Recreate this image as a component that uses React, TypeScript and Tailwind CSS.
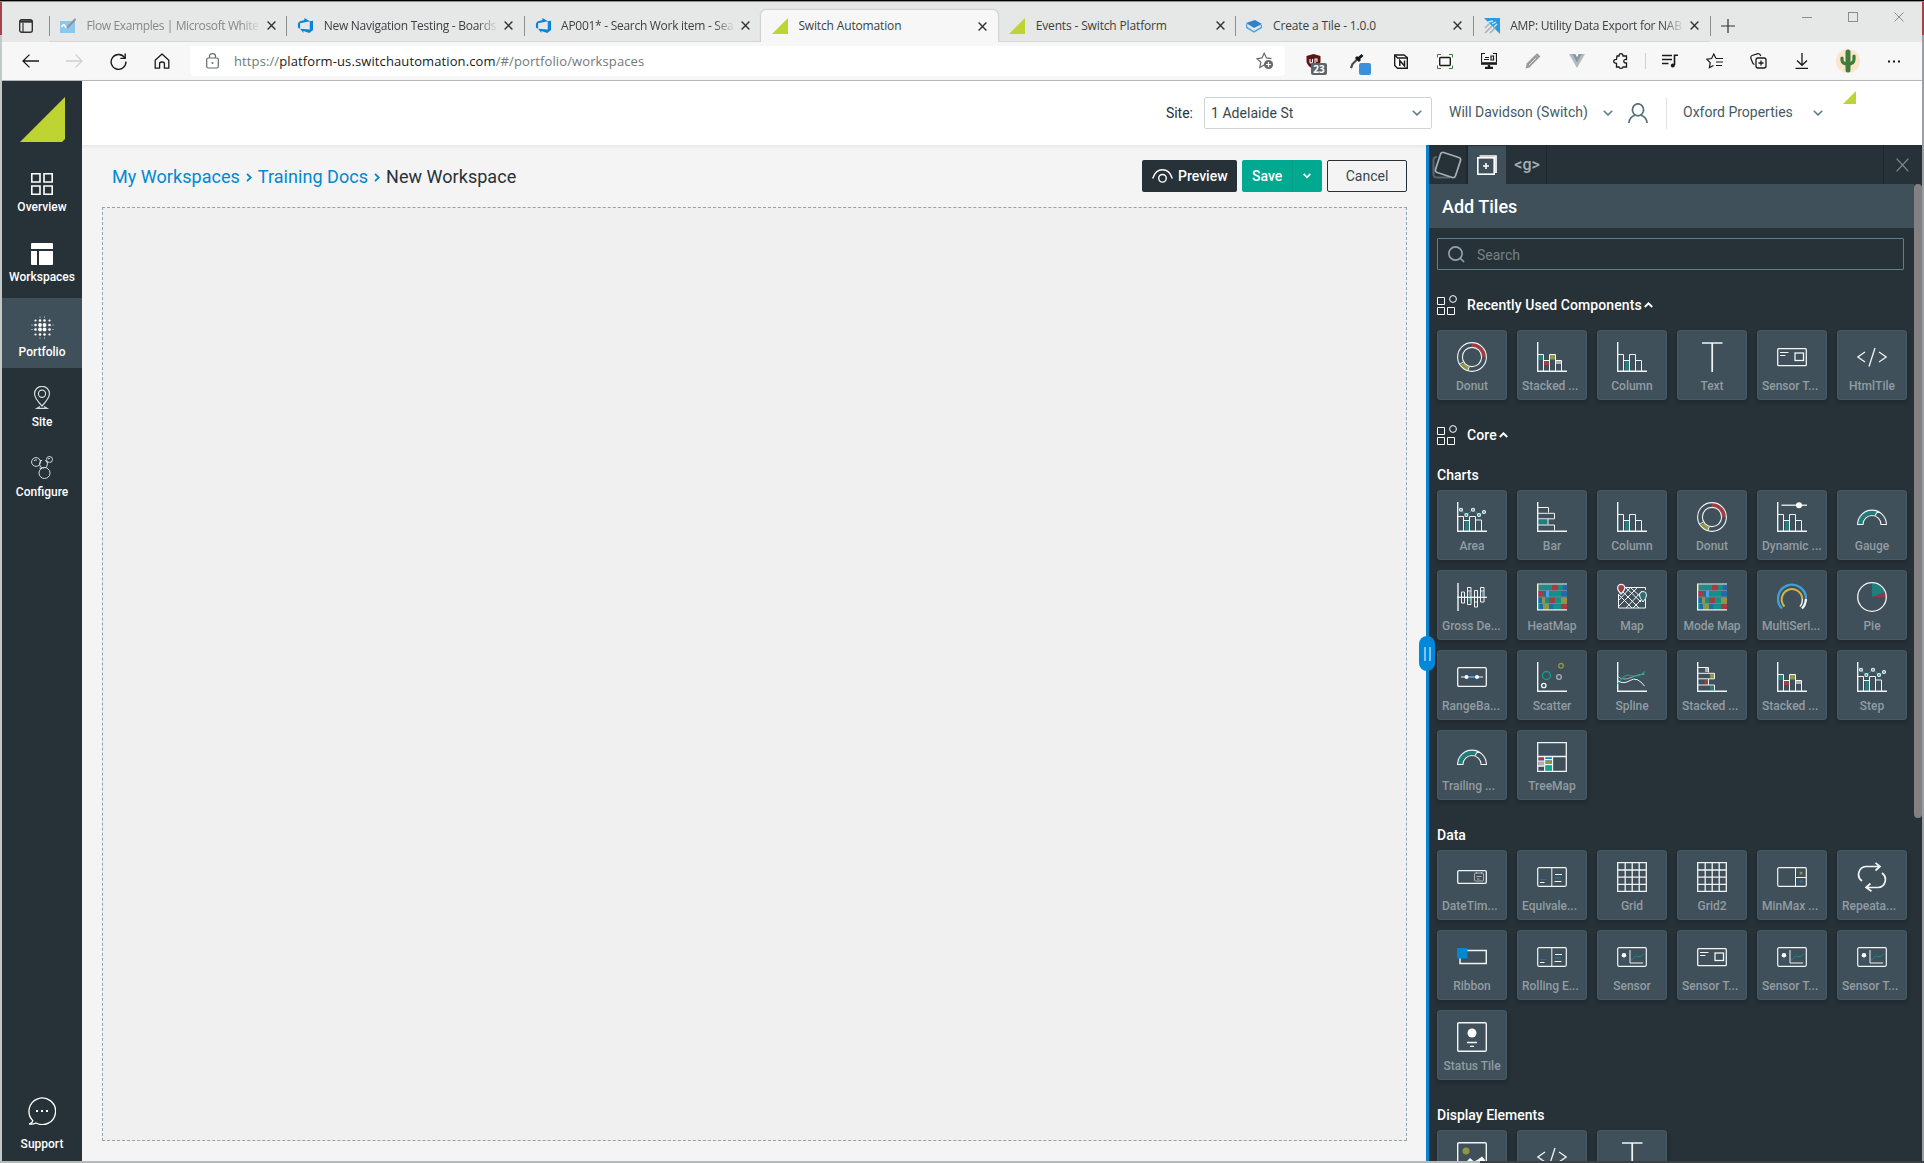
import React from "react";
import clsx from "clsx";

// ── Shared bits ──────────────────────────────────────────────
const TEAL = "#1f7f7a";
const RED = "#a03e42";
const OLIVE = "#8f9645";
const GREY = "#a9b1b6";

function Svg({
  w,
  h = w,
  box,
  className,
  children,
}: {
  w: number;
  h?: number;
  box?: string;
  className?: string;
  children: React.ReactNode;
}) {
  return (
    <svg
      width={w}
      height={h}
      viewBox={box ?? `0 0 ${w} ${h}`}
      fill="none"
      stroke="currentColor"
      className={clsx("block shrink-0", className)}
    >
      {children}
    </svg>
  );
}

function Chevron({ className }: { className?: string }) {
  return (
    <Svg w={10} h={6} className={className}>
      <path d="M0.7 0.7 L5 4.9 L9.3 0.7" strokeWidth="1.5" />
    </Svg>
  );
}

// ── Browser tabs ─────────────────────────────────────────────
function DevOpsIcon() {
  return (
    <Svg w={17} box="0 0 18 18">
      <path
        d="M17 4v9.74l-4 3.28-6.2-2.26V17l-3.51-4.59 10.23.8V4.44zm-3.41.49L7.85 1v2.29L2.58 4.84 1 6.87v4.61l2.26 1V6.57z"
        fill="#0a84d8"
        stroke="none"
      />
    </Svg>
  );
}

function SwitchIcon() {
  return (
    <Svg w={16}>
      <path d="M0 16 L16 0 V16Z" fill="#bdd433" stroke="none" />
    </Svg>
  );
}

function WhiteboardIcon() {
  return (
    <Svg w={16}>
      <rect y="3" width="15" height="12" fill="#8cc8ee" stroke="none" />
      <path d="M1.5 9 Q4 5 5 8 T9 8" stroke="#fff" strokeWidth="1.6" />
      <path d="M7 10 L15.5 1" stroke="#8b9296" strokeWidth="2" />
    </Svg>
  );
}

function StackIcon() {
  return (
    <Svg w={16}>
      <path d="M0 5 L9 2 L16 6 L8 10Z" fill="#2d83c9" stroke="none" />
      <path d="M0.5 6 V9.5 L8 14 L15.5 9.5 V7" stroke="#4da3dd" strokeWidth="1.5" />
    </Svg>
  );
}

function AmpIcon() {
  return (
    <Svg w={16}>
      <path d="M0 0 H16 V16Z" fill="#2b9be0" stroke="none" />
      <path d="M4 4 L9 3 M8 6 L12 4 M10 9 L13 6" stroke="#cfe9fa" strokeWidth="1.3" />
      <path d="M1 10 L5 6 M1 15 L8 8 M6 15 L11 10" stroke="#a9b2b8" strokeWidth="1.6" />
    </Svg>
  );
}

type BrowserTab = {
  title: string;
  icon: React.ReactNode;
  active?: boolean;
  faded?: boolean;
  long?: boolean;
  divider?: boolean;
};

const BROWSER_TABS: BrowserTab[] = [
  { title: "Flow Examples | Microsoft White", icon: <WhiteboardIcon />, faded: true, long: true, divider: true },
  { title: "New Navigation Testing - Boards", icon: <DevOpsIcon />, long: true, divider: true },
  { title: "AP001* - Search Work item - Sea", icon: <DevOpsIcon />, long: true, divider: true },
  { title: "Switch Automation", icon: <SwitchIcon />, active: true },
  { title: "Events - Switch Platform", icon: <SwitchIcon /> },
  { title: "Create a Tile - 1.0.0", icon: <StackIcon />, divider: true },
  { title: "AMP: Utility Data Export for NAB", icon: <AmpIcon />, long: true, divider: true },
];

function TabStrip() {
  return (
    <div className="flex h-[40px] shrink-0 items-end bg-[#e6e7e7]">
      <div className="flex h-8 w-[47px] items-center pl-[17px]">
        <Svg w={14} className="text-[#333]">
          <rect x="0.7" y="0.7" width="12.6" height="12.6" rx="2" strokeWidth="1.4" />
          <path d="M1 2.5 H13" strokeWidth="2.4" />
          <path d="M4 4 V13" strokeWidth="1.2" />
        </Svg>
      </div>
      {BROWSER_TABS.map((tab) => (
        <div
          key={tab.title}
          className={clsx(
            "flex h-[32px] w-[237.3px] items-center",
            tab.active
              ? "rounded-t-[5px] bg-[#f7f7f7] shadow-[0_0_2px_rgba(0,0,0,0.35)]"
              : "border-b border-[#d5d6d6]",
          )}
        >
          <span className={clsx("h-[20px] w-px", tab.divider && "bg-[#8b8d8e]")} />
          <span className="ml-[10px] w-[16px]">{tab.icon}</span>
          <span
            className={clsx(
              "ml-[10.5px] w-[174px] text-[12px] whitespace-nowrap",
              tab.faded ? "text-[#868886]" : "text-[#3d3f40]",
              tab.faded
                ? "tracking-[-0.38px]"
                : tab.long
                  ? "tracking-[-0.28px]"
                  : "tracking-[-0.15px]",
              tab.long && "[mask-image:linear-gradient(to_right,black_88%,transparent)]",
            )}
          >
            {tab.title}
          </span>
          <Svg w={9} className="ml-[6px] text-[#333]">
            <path d="M0.6 0.6 L8.4 8.4 M8.4 0.6 L0.6 8.4" strokeWidth="1.4" />
          </Svg>
        </div>
      ))}
      <span className="mb-[6px] h-[20px] w-px bg-[#8b8d8e]" />
      <Svg w={14} className="mb-[9px] ml-[10px] text-[#333]">
        <path d="M7 0 V14 M0 7 H14" strokeWidth="1.2" />
      </Svg>
      <div className="mb-[20px] ml-auto flex items-center gap-[36px] pr-[18px] text-[#8b8d8e]">
        <Svg w={10}>
          <path d="M0 5.5 H10" />
        </Svg>
        <Svg w={10}>
          <rect x="0.5" y="0.5" width="9" height="9" />
        </Svg>
        <Svg w={10}>
          <path d="M0.5 0.5 L9.5 9.5 M9.5 0.5 L0.5 9.5" />
        </Svg>
      </div>
    </div>
  );
}

// ── Browser toolbar ──────────────────────────────────────────
function ToolCell({ children }: { children: React.ReactNode }) {
  return (
    <div className="relative flex h-full w-[44px] shrink-0 items-center justify-center">
      {children}
    </div>
  );
}

function Toolbar() {
  return (
    <div className="flex h-[39px] shrink-0 items-center border-b border-[#b9b9b9] bg-[#f7f7f7] pl-[6px] text-[#1b1b1b]">
      <ToolCell>
        <Svg w={17} h={14}>
          <path d="M17 7 H1 M7.5 0.6 L1 7 L7.5 13.4" strokeWidth="1.3" />
        </Svg>
      </ToolCell>
      <ToolCell>
        <Svg w={17} h={14} className="text-[#cfcfcf]">
          <path d="M0 7 H16 M9.5 0.6 L16 7 L9.5 13.4" strokeWidth="1.3" />
        </Svg>
      </ToolCell>
      <ToolCell>
        <Svg w={17}>
          <path d="M14.8 5 A7.4 7.4 0 1 0 15.9 8.5" strokeWidth="1.4" />
          <path d="M15.2 0.5 V5.4 H10.3" strokeWidth="1.4" />
        </Svg>
      </ToolCell>
      <ToolCell>
        <Svg w={16}>
          <path
            d="M1.2 7.2 L8 1 L14.8 7.2 V15.2 H10.4 V10.4 Q10.4 9 8 9 T5.6 10.4 V15.2 H1.2Z"
            strokeWidth="1.3"
            strokeLinejoin="round"
          />
        </Svg>
      </ToolCell>
      <div className="ml-[6px] flex h-[30px] w-[1095px] items-center rounded-[4px] bg-white pl-[16px] pr-[11px]">
        <Svg w={13} h={16} className="text-[#666b6c]">
          <rect x="0.7" y="5" width="11.6" height="10" rx="1.5" strokeWidth="1.2" />
          <path d="M3.5 5 V3 Q3.5 0.7 6.5 0.7 T9.5 3 V5" strokeWidth="1.2" />
          <circle cx="6.5" cy="10" r="1" fill="currentColor" stroke="none" />
        </Svg>
        <span className="ml-[15px] pt-px text-[13px] tracking-[0.11px] whitespace-nowrap text-[#73787a]">
          https://<span className="text-[#1b1b1b]">platform-us.switchautomation.com</span>
          /#/portfolio/workspaces
        </span>
        <Svg w={18} className="ml-auto text-[#666b6c]">
          <path
            d="M8 13 L3.8 15.5 L4.8 10.2 L1 6.6 L6 5.9 L8.2 1.2 L10.5 5.9 L15.5 6.6"
            strokeWidth="1.2"
          />
          <circle cx="12.5" cy="12.5" r="4.6" fill="#666b6c" stroke="none" />
          <path d="M12.5 10 V15 M10 12.5 H15" stroke="#fff" strokeWidth="1.2" />
        </Svg>
      </div>
      <div className="ml-[6px] flex h-full">
        <ToolCell>
          <Svg w={15}>
            <path d="M0.5 2 L7.5 0 L14.5 2 V8 Q13 13 7.5 15 Q2 13 0.5 8Z" fill="#5c1416" stroke="none" />
            <path d="M4 5 V8 Q4 9 5 9 T6.5 8 V5 M9 9 V5 H11 V8" stroke="#fff" strokeWidth="1.1" />
          </Svg>
          <span className="absolute top-[21px] left-[20px] flex h-[12px] w-[16px] items-center justify-center rounded-[2px] bg-[#5a6669] text-[10px] leading-[12px] font-bold text-white">
            23
          </span>
        </ToolCell>
        <ToolCell>
          <Svg w={14} h={16}>
            <path d="M1 15 L2.5 11 L8 5.5" stroke="#444d52" strokeWidth="2.2" />
            <path d="M6 4 L10 8 M8 6 L12.5 2" stroke="#14181a" strokeWidth="3" />
          </Svg>
          <span className="absolute top-[21px] left-[24px] size-[12px] rounded-[2px] bg-[#3c8fd9]" />
        </ToolCell>
        <ToolCell>
          <Svg w={14} h={15}>
            <path d="M0.7 1 H10 L13.3 3.5 V14.3 H3.5 L0.7 11.5Z" strokeWidth="1.4" fill="#fff" />
            <path d="M1 1.5 L3.7 4 H13" strokeWidth="1.4" />
            <path d="M5.8 12 V6.5 L10.5 12 V6.5" strokeWidth="1.5" />
          </Svg>
        </ToolCell>
        <ToolCell>
          <Svg w={16} h={15}>
            <rect x="2.7" y="3.5" width="10.6" height="8" rx="1" strokeWidth="1.4" />
            <path d="M0.5 3.5 V0.5 H4 M12 0.5 H15.5 V3.5 M15.5 11.5 V14.5 H12 M4 14.5 H0.5 V11.5" stroke="#3f7a3f" />
          </Svg>
        </ToolCell>
        <ToolCell>
          <Svg w={16}>
            <path d="M0.5 9 V0.5 H4 M12 0.5 H15.5 V9" strokeWidth="1.2" />
            <path d="M4 4.5 H8 M3 6.5 H8 M10 3 V7 H12.5 V3Z" strokeWidth="1.2" />
            <path d="M0 10.5 H16" strokeWidth="2.6" />
            <path d="M8 12 V14 M4 15 H12" strokeWidth="2.4" />
          </Svg>
        </ToolCell>
        <ToolCell>
          <Svg w={16}>
            <path d="M0.5 15.5 L1.8 10.5 L5.5 14.2Z" fill="#9b9b9b" stroke="none" />
            <path d="M3 12.5 L12 3.5" stroke="#9b9b9b" strokeWidth="4.6" />
            <path d="M4 12 L11 5" stroke="#dedede" />
            <path d="M12 3.5 L13.8 1.8" stroke="#9b9b9b" strokeWidth="4.6" />
          </Svg>
        </ToolCell>
        <ToolCell>
          <Svg w={16} h={14}>
            <path d="M0 0 H6 L8 4 L10 0 H16 L8 14Z" fill="#b3bbc0" stroke="none" />
            <path d="M3.2 0 H6.2 L8 3.5 L9.8 0 H12.8 L8 8.5Z" fill="#8a979f" stroke="none" />
          </Svg>
        </ToolCell>
        <ToolCell>
          <Svg w={16}>
            <path
              d="M4 3 H6 Q6 0.7 8 0.7 T10 3 H13.5 V6.5 Q10.8 6.2 10.8 8.2 T13.5 10 V14 H10 Q10 15.3 8 15.3 T6 14 H3.5 V10.3 Q0.7 10.3 0.7 8.3 T3.5 6.3Z"
              strokeWidth="1.3"
            />
          </Svg>
        </ToolCell>
        <div className="mx-[2px] h-[16px] w-px self-center bg-[#cfcfcf]" />
        <ToolCell>
          <Svg w={16} h={14}>
            <path d="M0 1.5 H10 M0 5.5 H10 M0 9.5 H6.5" strokeWidth="1.6" />
            <path d="M12.5 11 V1.3 H16" strokeWidth="1.6" />
            <circle cx="10.8" cy="11.4" r="2" fill="currentColor" stroke="none" />
          </Svg>
        </ToolCell>
        <ToolCell>
          <Svg w={17} h={16}>
            <path d="M10 5.5 L7.8 1 L5.6 5.5 L0.9 6.2 L4.2 9.6 L3.4 14.6 L7.5 12.5" strokeWidth="1.2" />
            <path d="M10 5.5 H17 M10 9 H17 M10 12.5 H16" strokeWidth="1.2" />
          </Svg>
        </ToolCell>
        <ToolCell>
          <Svg w={17} h={16}>
            <rect x="6" y="5" width="10" height="10" rx="2" strokeWidth="1.3" />
            <path d="M11 7.5 V12.5 M8.5 10 H13.5" strokeWidth="1.3" />
            <path d="M4.5 11.5 Q3 11 2.5 9.5 L0.8 5 Q0.5 3 2 2.5 L8 0.7 Q10 0.5 10.8 3" strokeWidth="1.2" />
          </Svg>
        </ToolCell>
        <ToolCell>
          <Svg w={14} h={16}>
            <path d="M7 0 V12 M2 7.5 L7 12.3 L12 7.5 M0.5 15.3 H13" strokeWidth="1.3" />
          </Svg>
        </ToolCell>
        <ToolCell>
          <Svg w={24} className="translate-x-[2px]">
            <circle cx="12" cy="12" r="12" fill="#fbe5cd" stroke="none" />
            <path d="M12 3 V21" stroke="#3f7d3a" strokeWidth="5" strokeLinecap="round" />
            <path d="M6 9 V11 Q6 15 12 15 Q18 15 18 10 V7" stroke="#3f7d3a" strokeWidth="3.2" strokeLinecap="round" />
          </Svg>
        </ToolCell>
        <ToolCell>
          <Svg w={14} h={3} className="translate-x-[4px]">
            <path d="M1 1.5 H3 M6 1.5 H8 M11 1.5 H13" strokeWidth="2" />
          </Svg>
        </ToolCell>
      </div>
    </div>
  );
}

// ── Left navigation ──────────────────────────────────────────
const DOTS = [
  [9, 1, 0.5], [13.5, 1, 0.5],
  [4.5, 4.5, 1.1], [9, 4.5, 1.3], [13.5, 4.5, 1.3], [18.5, 4.5, 1.1],
  [1, 9, 0.6], [4.5, 9, 1.3], [9, 9, 1.9], [13.5, 9, 1.9], [18.5, 9, 1.3], [22, 9, 0.5],
  [1, 13.5, 0.6], [4.5, 13.5, 1.3], [9, 13.5, 1.9], [13.5, 13.5, 1.9], [18.5, 13.5, 1.3], [22, 13.5, 0.5],
  [4.5, 18.5, 1.1], [9, 18.5, 1.3], [13.5, 18.5, 1.3], [18.5, 18.5, 1.1],
  [9, 22, 0.5], [13.5, 22, 0.5],
];

type NavItem = {
  label: string;
  icon: React.ReactNode;
  active?: boolean;
  low?: boolean;
};

const NAV_ITEMS: NavItem[] = [
  {
    label: "Overview",
    low: true,
    icon: (
      <Svg w={22}>
        <path
          d="M0.8 0.8 H9 V9 H0.8Z M13 0.8 H21.2 V9 H13Z M0.8 13 H9 V21.2 H0.8Z M13 13 H21.2 V21.2 H13Z"
          strokeWidth="1.6"
        />
      </Svg>
    ),
  },
  {
    label: "Workspaces",
    low: true,
    icon: (
      <Svg w={22}>
        <path
          d="M0 1 Q0 0 1 0 H21 Q22 0 22 1 V6 H0Z M0 8 H6 V22 H1 Q0 22 0 21Z M8 8 H22 V21 Q22 22 21 22 H8Z"
          fill="#fff"
          stroke="none"
        />
      </Svg>
    ),
  },
  {
    label: "Portfolio",
    active: true,
    icon: (
      <Svg w={23}>
        {DOTS.map(([x, y, r]) => (
          <circle key={`${x}-${y}`} cx={x} cy={y} r={r} fill="#fff" stroke="none" />
        ))}
      </Svg>
    ),
  },
  {
    label: "Site",
    icon: (
      <Svg w={18} h={23} className="text-[#d3d9dc]">
        <path d="M9 20 Q1.5 12 1.5 7.8 A7.5 7.5 0 0 1 16.5 7.8 Q16.5 12 9 20Z" strokeWidth="1.2" />
        <circle cx="9" cy="7.8" r="3.6" strokeWidth="1.2" />
        <path d="M7 20.5 L4 22.3 H14 L11 20.5" strokeWidth="1.2" />
      </Svg>
    ),
  },
  {
    label: "Configure",
    icon: (
      <Svg w={22} h={23} className="text-[#d3d9dc]">
        <circle cx="5" cy="6" r="4.4" />
        <circle cx="18.5" cy="3.5" r="3" />
        <circle cx="13.5" cy="17" r="5.5" />
        <circle cx="12.5" cy="8" r="4" strokeDasharray="17 3" />
        <path d="M9 4.5 H11 M16 6 L17 6.5 M10 13 L8.5 12 M3 5 Q4 3.5 6 4 M17 3 L19 2.3" />
      </Svg>
    ),
  },
];

function Sidebar() {
  return (
    <nav className="flex w-[80px] shrink-0 flex-col bg-[#263238] text-[12px] font-medium text-white">
      <div className="h-[72px] pt-[16px] pl-[18px]">
        <Svg w={45}>
          <path d="M0 45 L45 0 V42 L42 45Z" fill="#bdd433" stroke="none" />
        </Svg>
      </div>
      {NAV_ITEMS.map((item) => (
        <div
          key={item.label}
          className={clsx(
            "flex h-[70px] flex-col items-center pt-[18px]",
            item.active && "mt-[5px] bg-[#3f505a]",
          )}
        >
          <div className={clsx("flex h-[23px] items-start", item.low && "mt-[2px] -mb-[2px]")}>
            {item.icon}
          </div>
          <div className="mt-[5px] leading-[16px]">{item.label}</div>
        </div>
      ))}
      <div className="mt-auto flex flex-col items-center pb-[9px]">
        <Svg w={28}>
          <path
            d="M4.8 23.6 A13.3 13.3 0 1 1 8 26 Q5 27.6 1.2 27 Q4.8 25.8 4.8 23.6Z"
            strokeWidth="1.3"
          />
          <path d="M8 14 H10 M13 14 H15 M18 14 H20" strokeWidth="2" />
        </Svg>
        <div className="mt-[11px] leading-[16px]">Support</div>
      </div>
    </nav>
  );
}

// ── App header ───────────────────────────────────────────────
function Header() {
  return (
    <header className="z-10 flex h-[64px] shrink-0 items-center justify-end bg-white pr-[65px] text-[14px] text-[#455a64] shadow-[0_1px_4px_rgba(0,0,0,0.08)]">
      <span className="mr-[11px] text-[#263238]">Site:</span>
      <div className="flex h-[32px] w-[228px] items-center justify-between rounded-[2px] border border-[#cfd4d6] pr-[9px] pl-[6px] tracking-[0.04px] text-[#37474f]">
        1 Adelaide St
        <Chevron className="text-[#607d8b]" />
      </div>
      <span className="ml-[17px] w-[142px] pb-[2px] whitespace-nowrap">Will Davidson (Switch)</span>
      <Chevron className="ml-[12px] text-[#607d8b]" />
      <Svg w={20} h={20} className="ml-[15px] text-[#546e7a]">
        <ellipse cx="10" cy="6.8" rx="5.6" ry="6" strokeWidth="1.7" />
        <path d="M0.9 20 Q1.5 14 7 12.3 M19.1 20 Q18.5 14 13 12.3" strokeWidth="1.7" />
      </Svg>
      <span className="mr-[16px] ml-[18px] h-[31px] w-px bg-[#dfe3e5]" />
      <span className="w-[112px] pb-[2px] whitespace-nowrap">Oxford Properties</span>
      <Chevron className="ml-[18px] text-[#607d8b]" />
      <Svg w={14} h={14} className="mb-[30px] ml-[20px]">
        <path d="M0 13 L13 0 V13Z" fill="#bdd433" stroke="none" />
      </Svg>
    </header>
  );
}

function Separator() {
  return (
    <Svg w={6} h={9} className="mx-[6px] mt-[3px]">
      <path d="M1 0.8 L4.8 4.5 L1 8.2" strokeWidth="1.8" />
    </Svg>
  );
}

function Workspace() {
  return (
    <main className="flex w-[1344px] shrink-0 flex-col bg-[#f4f4f4] pt-[15px] pr-[19px] pb-[20px] pl-[20px]">
      <div className="flex h-[32px] items-center text-[#0288d1]">
        <div className="ml-[10px] flex items-center text-[18px] tracking-[0.04px]">
          My Workspaces
          <Separator />
          Training Docs
          <Separator />
          <span className="text-[#263238]">New Workspace</span>
        </div>
        <div className="ml-auto flex gap-[5px] text-[14px] font-medium text-white">
          <div className="flex h-[32px] w-[95px] items-center rounded-[2px] bg-[#263238] pl-[10px]">
            <Svg w={21} h={14}>
              <path d="M0.7 9.5 Q3.5 0.7 10.5 0.7 T20.3 9.5" strokeWidth="1.4" />
              <circle cx="10.5" cy="9.3" r="3.8" strokeWidth="1.4" />
            </Svg>
            <span className="ml-[5px]">Preview</span>
          </div>
          <div className="flex h-[32px] w-[80px] items-center rounded-[2px] bg-[#00a98f]">
            <span className="w-[50px] pl-[10px]">Save</span>
            <span className="flex h-full grow items-center justify-center border-l border-[#099d86] pr-px">
              <Svg w={8} h={6}>
                <path d="M0.7 1 L4 4.3 L7.3 1" strokeWidth="1.8" />
              </Svg>
            </span>
          </div>
          <div className="flex h-[32px] w-[80px] items-center justify-center rounded-[2px] border border-[#263238] font-normal text-[#37474f]">
            Cancel
          </div>
        </div>
      </div>
      <div className="mt-[15px] grow border border-dashed border-[#90a4ae] bg-[#f0f0f0]" />
    </main>
  );
}

// ── Tile icons (30 × 30) ─────────────────────────────────────
const AXES = <path d="M0.7 0 V29.3 H30" strokeWidth="1.4" />;

const DonutIcon = (
  <>
    <path d="M15 3 A12 12 0 0 1 27 15" stroke={RED} strokeWidth="4.5" />
    <path d="M12 26.5 A12 12 0 0 1 5 22" stroke={OLIVE} strokeWidth="4.5" />
    <circle cx="15" cy="15" r="14.4" strokeWidth="1.1" />
    <circle cx="15" cy="15" r="9.6" strokeWidth="1.1" />
    <path d="M2.5 22.3 L6.5 19.8 M10.8 29 L12.3 24.5" />
  </>
);

const BarsIcon = (
  <>
    <rect x="8" y="18.5" width="4.5" height="11" fill={TEAL} stroke="none" />
    <path d="M1 12.5 H6.5 V29 M6.5 18.5 H12.5 V29 M12.5 29 V12.5 H18.5 V29 M18.5 18.5 H24.5 V29" />
    {AXES}
  </>
);

const StackedColumnIcon = (
  <>
    <rect x="1.5" y="12.5" width="5" height="5.5" fill={TEAL} stroke="none" />
    <rect x="7" y="18.5" width="5.5" height="4.5" fill={RED} stroke="none" />
    <rect x="13" y="12.5" width="5.5" height="5" fill={OLIVE} stroke="none" />
    <rect x="19" y="18" width="5.5" height="4" fill={GREY} stroke="none" />
    <path d="M1 12.5 H6.5 V29 M6.5 18.5 H12.5 V29 M12.5 29 V12.5 H18.5 V29 M18.5 18.5 H24.5 V29" />
    {AXES}
  </>
);

const AREA_POINTS = [[4, 7.7], [9.4, 13], [16, 7.7], [22, 13], [27, 10]];

const AreaIcon = (
  <>
    <rect x="8" y="18.5" width="4" height="11" fill={TEAL} stroke="none" />
    <path d="M1 14.5 H6.5 V29 M6.5 18.5 H12.5 V29 M12.5 29 V14.5 H18.5 V29 M18.5 18 H24.5 V29" />
    <path d="M4 7.7 L9.4 13 L16 7.7 L22 13 L27 10" stroke="#13a394" />
    {AREA_POINTS.map(([x, y]) => (
      <circle key={x} cx={x} cy={y} r="1.5" fill="#5b90a0" strokeWidth="1.1" />
    ))}
    {AXES}
  </>
);

const GaugeIcon = (
  <>
    <path d="M3 22.5 A12 12 0 0 1 20 11.2" stroke={TEAL} strokeWidth="4.5" />
    <path d="M0.6 22.5 A14.4 14.4 0 0 1 29.4 22.5 H24 A9 9 0 0 0 6 22.5Z M18 13.5 L21 9" strokeWidth="1.1" />
  </>
);

const HEAT_ROWS: [number, string][][] = [
  [[2, OLIVE], [13, "#148f8a"], [6, RED], [5, "#148f8a"], [4, "#1d6ca8"]],
  [[6, RED], [3, "#1d6ca8"], [3, "#4aa6dd"], [12, "#148f8a"], [6, "#1d6ca8"]],
  [[5, "#1d6ca8"], [3, OLIVE], [4, "#148f8a"], [6, RED], [6, "#148f8a"], [6, OLIVE]],
  [[3, "#148f8a"], [3, "#1d6ca8"], [6, OLIVE], [4, "#1d6ca8"], [8, "#148f8a"], [6, RED]],
];

const HeatIcon = (
  <>
    {HEAT_ROWS.map((row, r) => {
      let x = 0;
      return row.map(([w, color]) => {
        x += w;
        return (
          <rect key={`${r}-${x}`} x={x - w} y={2.5 + r * 6.5} width={w} height="5.7" fill={color} stroke="none" />
        );
      });
    })}
    <path d="M30 2 H0.6 V27.8 H30" strokeWidth="1.2" />
    <path d="M1 8.5 H30 M1 15 H30 M1 21.5 H30" strokeWidth="0.6" opacity="0.5" />
  </>
);

const GridIcon = (
  <path
    d="M0.7 0.7 H29.3 V29.3 H0.7Z M8.2 1 V29 M15.2 1 V29 M22.2 1 V29 M1 8 H29 M1 15.2 H29 M1 22.4 H29"
    strokeWidth="1.3"
  />
);

const SensorTextIcon = (
  <>
    <rect x="0.7" y="6.7" width="28.6" height="17" rx="1" strokeWidth="1.3" />
    <path d="M3 10.5 H11.5 M3 13.5 H8.5" />
    <rect x="18" y="11" width="8.5" height="7.5" strokeWidth="1.3" />
  </>
);

const SensorIcon = (
  <>
    <rect x="0.7" y="5.7" width="28.6" height="18.6" rx="1.2" strokeWidth="1.2" />
    <circle cx="7" cy="13.3" r="2.3" fill="#fff" stroke="none" />
    <path d="M4 17.8 H9.5" stroke="#206f9c" />
    <path d="M13 8 V21 H26" />
    <path d="M14 18 Q16 18 17 15.5 T21 14.5 T26 12" stroke="#2a7d8c" />
  </>
);

const EquivalentIcon = (
  <>
    <rect x="0.7" y="5.7" width="28.6" height="18.6" rx="1.2" strokeWidth="1.2" />
    <path d="M14.8 6 V24 M18 12.5 H25 M17.5 19.5 H24.5 M3 20.5 H7.5" />
    <path d="M3 17.5 H9.5" stroke="#1675ad" />
    <path d="M18 16 H24" stroke="#2a7d8c" />
  </>
);

const ICONS: Record<string, React.ReactNode> = {
  donut: DonutIcon,
  stackedColumn: StackedColumnIcon,
  column: BarsIcon,
  text: <path d="M5 1 H25.5 M15.2 1 V30" strokeWidth="1.7" />,
  sensorText: SensorTextIcon,
  html: <path d="M8 10 L0.8 15 L8 20 M22 10 L29.2 15 L22 20 M18 6 L12 24.5" strokeWidth="1.3" />,
  area: AreaIcon,
  bar: (
    <>
      <rect x="1.5" y="18" width="9" height="4.5" fill={TEAL} stroke="none" />
      <path d="M1 5.5 H11.5 V10.5 M1 11.3 H17.5 V16.8 H1 M11 17 V22.5 M1 23 H17.5 V28.5" />
      {AXES}
    </>
  ),
  dynamic: (
    <>
      {BarsIcon}
      <path d="M4.5 3.2 H30" strokeWidth="1.3" />
      <circle cx="22" cy="3.2" r="3" fill="#fff" stroke="none" />
    </>
  ),
  gauge: GaugeIcon,
  gross: (
    <>
      <path d="M1 1 V29" strokeWidth="1.4" />
      <rect x="11" y="16" width="3.5" height="3.5" fill={TEAL} stroke="none" />
      <path d="M4.5 10 H7.5 V21 H4.5Z M10.5 5.5 H14 V22.5 H10.5Z M17.5 8.5 H20.5 V25 H17.5Z M23.5 5.5 H27 V20 H23.5Z M10.5 9 H14 M17.5 20 H20.5 M23.5 9 H27" />
      <path d="M12.3 9 V14 M25.3 9 V14" stroke="#5da8b5" />
      <path d="M0 15.3 H30" strokeWidth="1.3" />
    </>
  ),
  heat: HeatIcon,
  map: (
    <>
      <path d="M1.5 12 V26 H28.5 V17 M8 5.5 H28.5 V8 M2 13 L15 26 M6 10 L22 26 M9 6 L24 20 M14 6 L26 17 M2 24 L20 6 M9 26 L25 9 M16 26 L24 18 M2 18 L13 6" />
      <path d="M4 12 Q0.6 8 0.6 6 A3.6 3.6 0 0 1 7.8 6 Q7.8 8 4 12Z" fill={RED} strokeWidth="1.2" />
      <path d="M26 20 Q22.5 16 22.5 13 A3.5 3.5 0 0 1 29.5 13 Q29.5 16 26 20Z" fill="#2b6e72" />
    </>
  ),
  multi: (
    <>
      <path d="M5 26.5 A14 14 0 1 1 29 17" stroke="#3f9fd8" strokeWidth="2.4" />
      <path d="M29 17 Q28.5 23 25 26.5" strokeWidth="2.4" />
      <path d="M7.5 24.5 A10.3 10.3 0 1 1 25.3 17" stroke="#d6b545" strokeWidth="2" />
      <path d="M25.3 17 Q25.5 22 22.8 24.5" strokeWidth="1.4" />
    </>
  ),
  pie: (
    <>
      <path d="M15 15 V1 A14 14 0 0 1 28 10.5Z" fill={TEAL} stroke="none" />
      <path d="M15 15 L28 10.5 L29 15Z" fill="#94364f" stroke="none" />
      <circle cx="15" cy="15" r="14.3" strokeWidth="1.3" />
    </>
  ),
  range: (
    <>
      <rect x="0.7" y="5.7" width="28.6" height="18.6" rx="1.2" strokeWidth="1.3" />
      <path d="M4 15 H26" />
      <path d="M9 15 H20" stroke="#2f8fdd" strokeWidth="1.3" />
      <circle cx="9.5" cy="15" r="2" fill="#fff" stroke="none" />
      <circle cx="20" cy="15" r="2" fill="#fff" stroke="none" />
    </>
  ),
  scatter: (
    <>
      {AXES}
      <circle cx="9.5" cy="13.5" r="4" stroke="#0fa18f" strokeWidth="1.3" />
      <circle cx="24" cy="3.8" r="2.3" stroke={OLIVE} strokeWidth="1.3" />
      <circle cx="22" cy="15" r="2.3" stroke={GREY} strokeWidth="1.3" />
      <circle cx="6.8" cy="23.5" r="2.2" strokeWidth="1.3" />
    </>
  ),
  spline: (
    <>
      {AXES}
      <path d="M1 14.5 Q6 19 14 15.5 T27.5 12" stroke={GREY} />
      <path d="M1 22 Q7 11 14 13.5 T28 9.5" stroke="#0fa18f" strokeWidth="1.2" />
      <path d="M1 19 Q7 22.5 13 18.5 Q20 14 27.5 24" />
    </>
  ),
  stackedBar: (
    <>
      <rect x="8" y="6" width="4" height="4" fill={GREY} stroke="none" />
      <rect x="13" y="12" width="4.5" height="4.5" fill={OLIVE} stroke="none" />
      <rect x="7.5" y="18" width="4" height="4.5" fill={RED} stroke="none" />
      <rect x="13" y="24" width="4.5" height="4.5" fill={TEAL} stroke="none" />
      <path d="M1 5.5 H11.5 V10.5 M1 11.3 H17.5 V16.8 H1 M11.5 17 V22.8 M1 23 H17.5 V28.5" />
      {AXES}
    </>
  ),
  tree: (
    <>
      <rect x="1.5" y="15" width="5.5" height="3.5" fill={RED} stroke="none" />
      <rect x="1.5" y="20" width="5.5" height="3.5" fill={GREY} stroke="none" />
      <rect x="8.5" y="15" width="6" height="2" fill="#0288d1" stroke="none" />
      <rect x="8.5" y="18.5" width="6" height="3" fill={OLIVE} stroke="none" />
      <rect x="8.5" y="23.5" width="6" height="5" fill="#00a98f" stroke="none" />
      <path
        d="M0.7 0.7 H29.3 V29.3 H0.7Z M1 14.5 H29 M15.5 15 V29 M7.7 15 V29 M1 19.2 H7 M1 24 H7 M8 17.7 H15 M8 22.5 H15"
        strokeWidth="1.3"
      />
    </>
  ),
  date: (
    <>
      <rect x="0.7" y="8.7" width="28.6" height="12.6" rx="1.2" strokeWidth="1.3" />
      <rect x="17.5" y="11" width="9" height="8" rx="1" stroke={GREY} />
      <path d="M19.5 10 V12 M24.5 10 V12 M19.5 14.5 H24.5 M20 17 H22.5" stroke={GREY} />
    </>
  ),
  equivalent: EquivalentIcon,
  grid: GridIcon,
  minmax: (
    <>
      <rect x="0.7" y="5.7" width="28.6" height="18.6" rx="1.2" strokeWidth="1.2" />
      <path d="M18.5 6 V24 M18.5 15.5 H29" />
      <circle cx="24" cy="11" r="1.5" fill={OLIVE} stroke="none" />
      <circle cx="24" cy="19.5" r="1.6" fill="#206fa5" stroke="none" />
    </>
  ),
  repeat: (
    <path
      d="M5 19 A8 8 0 0 1 9 4.5 H23 M18.5 0.8 L23 4.5 L18.5 8.5 M25 11 A8 8 0 0 1 21 25.5 H9 M13.5 21.5 L9 25.5 L14.5 29.3"
      strokeWidth="1.7"
    />
  ),
  ribbon: (
    <>
      <rect x="3" y="8.5" width="26.3" height="13" strokeWidth="1.5" />
      <rect y="6" width="10.5" height="10.5" fill="#0288d1" stroke="none" />
    </>
  ),
  sensor: SensorIcon,
  status: (
    <>
      <rect x="0.7" y="0.7" width="28.6" height="28.6" rx="1.2" strokeWidth="1.4" />
      <circle cx="15" cy="11" r="4.5" fill="#fff" stroke="none" />
      <path d="M10 20.5 H20 M13 24.3 H17" strokeWidth="1.3" />
    </>
  ),
  image: (
    <>
      <rect x="0.7" y="0.7" width="28.6" height="28.6" rx="1.2" strokeWidth="1.4" />
      <circle cx="9" cy="9" r="3.5" fill={OLIVE} stroke="none" />
      <path d="M3 26 L13 16 L17 19.5 L21 17.5 L25 14.5 L28 18 V27 H3Z" fill="#fff" stroke="none" />
    </>
  ),
};

type TileDef = [icon: string, label: string];

const RECENT: TileDef[] = [
  ["donut", "Donut"], ["stackedColumn", "Stacked ..."], ["column", "Column"],
  ["text", "Text"], ["sensorText", "Sensor T..."], ["html", "HtmlTile"],
];

const CHARTS: TileDef[] = [
  ["area", "Area"], ["bar", "Bar"], ["column", "Column"], ["donut", "Donut"], ["dynamic", "Dynamic ..."], ["gauge", "Gauge"],
  ["gross", "Gross De..."], ["heat", "HeatMap"], ["map", "Map"], ["heat", "Mode Map"], ["multi", "MultiSeri..."], ["pie", "Pie"],
  ["range", "RangeBa..."], ["scatter", "Scatter"], ["spline", "Spline"], ["stackedBar", "Stacked ..."], ["stackedColumn", "Stacked ..."], ["area", "Step"],
  ["gauge", "Trailing ..."], ["tree", "TreeMap"],
];

const DATA: TileDef[] = [
  ["date", "DateTim..."], ["equivalent", "Equivale..."], ["grid", "Grid"], ["grid", "Grid2"], ["minmax", "MinMax ..."], ["repeat", "Repeata..."],
  ["ribbon", "Ribbon"], ["equivalent", "Rolling E..."], ["sensor", "Sensor"], ["sensorText", "Sensor T..."], ["sensor", "Sensor T..."], ["sensor", "Sensor T..."],
  ["status", "Status Tile"],
];

// Labels of this row sit below the fold.
const DISPLAY: TileDef[] = [["image", ""], ["html", ""], ["text", ""]];

function TileGrid({ tiles }: { tiles: TileDef[] }) {
  return (
    <div className="grid grid-cols-[repeat(6,70px)] gap-[10px]">
      {tiles.map(([icon, label], i) => (
        <div
          key={i}
          className="h-[70px] rounded-[3px] border border-[#455a64] bg-[#3f505a] px-[4px] pt-[11px] shadow-[0_2px_4px_rgba(0,0,0,0.25)]"
        >
          <Svg w={30} className="mx-auto text-[#f2f4f5]">
            {ICONS[icon]}
          </Svg>
          <div
            className={clsx(
              "mt-[6px] text-[12px] leading-[16px] font-medium whitespace-nowrap text-[#929ca2]",
              label.endsWith("...") ? "text-left" : "text-center",
            )}
          >
            {label}
          </div>
        </div>
      ))}
    </div>
  );
}

function SectionHeader({ title }: { title: string }) {
  return (
    <div className="mt-[25px] flex h-[20px] items-center">
      <Svg w={20}>
        <path d="M0.5 2.5 H7.5 V9.5 H0.5Z M0.5 12.5 H7.5 V19.5 H0.5Z M10.5 12.5 H17.5 V19.5 H10.5Z" />
        <circle cx="16" cy="4" r="3.4" />
      </Svg>
      <span className="ml-[10px] tracking-[0.08px]">{title}</span>
      <Svg w={9} h={6} className="ml-[2.5px]">
        <path d="M0.8 5 L4.5 1.3 L8.2 5" strokeWidth="1.9" />
      </Svg>
    </div>
  );
}

function TilePanel() {
  return (
    <aside className="relative flex w-[496px] flex-col border-l-[3px] border-[#0a84cf] bg-[#263238] text-[14px] font-medium text-white">
      <div className="absolute top-[491px] left-[-10px] z-10 flex h-[35px] w-[16px] items-center justify-center gap-[3px] rounded-full bg-[#0288d8]">
        <span className="h-[14px] w-[2px] bg-[#7cc4ee]" />
        <span className="h-[14px] w-[2px] bg-[#7cc4ee]" />
      </div>
      <div className="flex h-[39px] shrink-0">
        <div className="flex w-[39px] items-center border-r-2 border-[#1f282d] pl-[3px]">
          <Svg w={30} className="text-[#a5afb5]">
            <path d="M5 7 Q1.5 7 1.5 10 V24 Q1.5 27.5 5 27.5 H18" stroke="#56646c" strokeWidth="2" />
            <rect x="5.5" y="4.5" width="21" height="21" rx="2.5" transform="rotate(18 16 15)" strokeWidth="1.7" />
          </Svg>
        </div>
        <div className="mt-px flex w-[38px] items-center justify-center bg-[#3f505a]">
          <Svg w={20}>
            <path d="M2.5 1 H19 V18" strokeWidth="1.7" />
            <rect x="0.8" y="2.8" width="16.4" height="16.4" strokeWidth="1.6" />
            <path d="M9 8 V14 M6 11 H12" strokeWidth="1.6" />
          </Svg>
        </div>
        <div className="flex w-[41px] items-center justify-center border-r border-[#1f282d] pl-[2px] text-[16px] text-[#a5afb5]">
          &lt;g&gt;
        </div>
        <div className="ml-auto flex w-[39px] items-center justify-center border-l border-[#1f282d] pr-[2px]">
          <Svg w={13} h={14} className="text-[#7d8a92]">
            <path d="M0.6 0.6 L12.4 13.4 M12.4 0.6 L0.6 13.4" strokeWidth="1.3" />
          </Svg>
        </div>
      </div>
      <div className="flex min-h-0 grow">
        <div className="w-[485px] overflow-hidden">
          <div className="flex h-[44px] items-center bg-[#3f505a] pl-[13px] text-[18px]">Add Tiles</div>
          <div className="px-[8px] pt-[10px]">
            <div className="flex h-[32px] w-[467px] items-center rounded-[1px] border border-[#607d8b] pl-[10px] font-normal text-[#74828a]">
              <Svg w={17} className="text-[#90a4ae]">
                <circle cx="7.5" cy="7.5" r="6.6" strokeWidth="1.6" />
                <path d="M12 12 L16 16" strokeWidth="1.7" />
              </Svg>
              <span className="ml-[12px] pt-[2px]">Search</span>
            </div>
            <SectionHeader title="Recently Used Components" />
            <div className="mt-[15px]">
              <TileGrid tiles={RECENT} />
            </div>
            <SectionHeader title="Core" />
            <div className="mt-[20px] mb-[5px] leading-[20px]">Charts</div>
            <TileGrid tiles={CHARTS} />
            <div className="mt-[25px] mb-[5px] leading-[20px]">Data</div>
            <TileGrid tiles={DATA} />
            <div className="mt-[25px] mb-[5px] leading-[20px]">Display Elements</div>
            <TileGrid tiles={DISPLAY} />
          </div>
        </div>
        <div className="h-[634px] w-[8px] rounded-full bg-[#828081]" />
      </div>
    </aside>
  );
}

export default function App() {
  return (
    <div className="flex h-[1163px] w-[1924px] flex-col overflow-hidden bg-[#b4b9ba] font-['Open_Sans',sans-serif]">
      <div className="h-[2px] shrink-0 border-t border-black bg-[#8f9090]" />
      <div className="flex h-[1159px] shrink-0">
        <div className="w-[2px] border-t-[33px] border-[#a3444a] bg-[#c3c8c8]" />
        <div className="flex w-[1920px] flex-col overflow-hidden">
          <TabStrip />
          <Toolbar />
          <div className="flex min-h-0 grow font-['Roboto',sans-serif]">
            <Sidebar />
            <div className="flex w-[1840px] flex-col">
              <Header />
              <div className="flex min-h-0 grow">
                <Workspace />
                <TilePanel />
              </div>
            </div>
          </div>
        </div>
        <div className="w-[2px] border-t-[33px] border-[#a3444a] bg-[#9a9fa1]" />
      </div>
      <div className="ml-[1480px] grow bg-[#3a4145]" />
    </div>
  );
}
